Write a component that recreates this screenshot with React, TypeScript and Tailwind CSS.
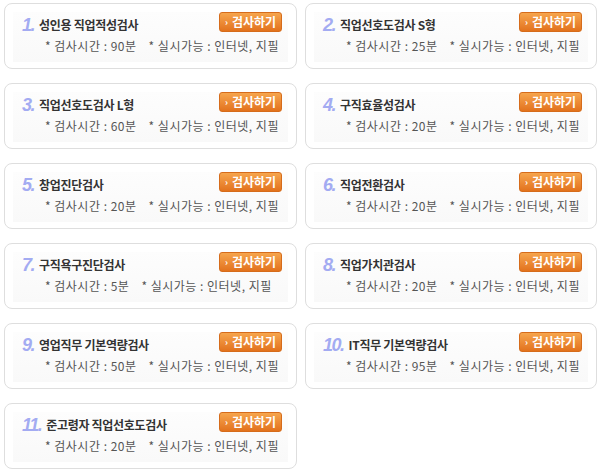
const tests = [
  { title: "성인용 직업적성검사", time: "90분" },
  { title: "직업선호도검사 S형", time: "25분" },
  { title: "직업선호도검사 L형", time: "60분" },
  { title: "구직효율성검사", time: "20분" },
  { title: "창업진단검사", time: "20분" },
  { title: "직업전환검사", time: "20분" },
  { title: "구직욕구진단검사", time: "5분" },
  { title: "직업가치관검사", time: "20분" },
  { title: "영업직무 기본역량검사", time: "50분" },
  { title: "IT직무 기본역량검사", time: "95분" },
  { title: "준고령자 직업선호도검사", time: "20분" },
];

function TestCard({ no, title, time }: { no: number; title: string; time: string }) {
  return (
    <div className="h-[66px] rounded-[8px] border border-[#dedede] bg-white p-[8px] pb-[6px]">
      <div className="h-full bg-gradient-to-b from-[#fdfdfd] to-[#f9f9f9] pl-[9px] pr-[6px]">
        <div className="flex h-[20px] items-center justify-between">
          <div className="flex items-end gap-[5px] pt-[6px]">
            <span className="font-['Liberation_Sans',sans-serif] text-[18px] font-bold italic leading-[18px] tracking-[-1.5px] text-[#a3abf2]">
              {no}.
            </span>
            <span className="whitespace-nowrap pb-[2px] text-[12px] font-bold leading-[14px] tracking-[-0.3px] text-[#333]">
              {title}
            </span>
          </div>
          <button className="flex h-[20px] w-[63px] items-center justify-center gap-[4px] rounded-[3px] border border-[#d66c1b] bg-gradient-to-b from-[#f6a54c] to-[#e2721c] text-[12px] font-bold leading-none text-white">
            <span className="text-[9px]">›</span>
            검사하기
          </button>
        </div>
        <div className="mt-[6px] flex gap-[12px] whitespace-nowrap pl-[23px] text-[12px] leading-[16px] tracking-[0.5px] text-[#555]">
          <span>* 검사시간 : {time}</span>
          <span>* 실시가능 : 인터넷, 지필</span>
        </div>
      </div>
    </div>
  );
}

export default function App() {
  return (
    <div className="h-[472px] w-[601px] bg-white font-['Noto_Sans_CJK_KR','Noto_Sans',sans-serif]">
      <div className="grid grid-cols-[293px_292px] gap-x-[8px] gap-y-[14px] pl-[4px] pt-[3px]">
        {tests.map((t, i) => (
          <TestCard key={i} no={i + 1} title={t.title} time={t.time} />
        ))}
      </div>
    </div>
  );
}
